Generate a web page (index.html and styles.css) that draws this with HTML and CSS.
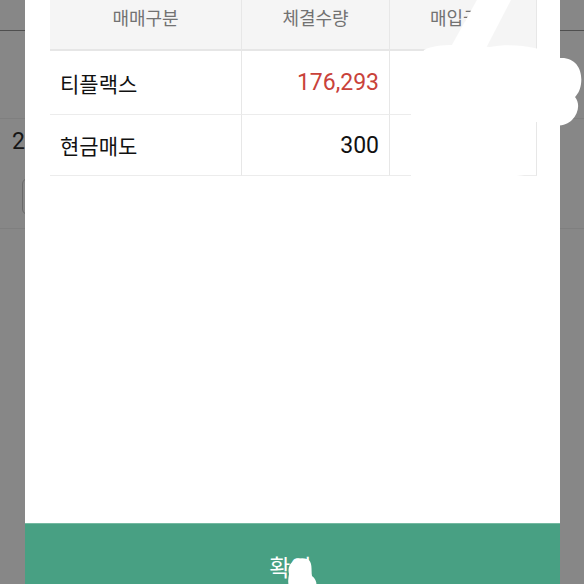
FILE: index.html
```html
<!DOCTYPE html>
<html lang="ko">
<head>
<meta charset="utf-8">
<title>체결내역</title>
<link rel="stylesheet" href="styles.css">
</head>
<body>
  <div class="page">
    <div class="page-top"></div>
    <div class="page-row"></div>
    <div class="page-row page-row-tall">
      <span class="page-num">2</span>
      <div class="page-btn"></div>
    </div>
  </div>

  <div class="dialog">
    <div class="grid">
      <div class="cell head">매매구분</div>
      <div class="cell head">체결수량</div>
      <div class="cell head">매입금액</div>

      <div class="cell r1 name">티플랙스</div>
      <div class="cell r1 num red">176,293</div>
      <div class="cell r1 num"></div>

      <div class="cell r2 name">현금매도</div>
      <div class="cell r2 num">300</div>
      <div class="cell r2 num"></div>
    </div>
    <div class="spacer"></div>
    <div class="confirm">확인</div>
  </div>

  <svg class="scribble" width="584" height="584" viewBox="0 0 584 584" xmlns="http://www.w3.org/2000/svg">
    <defs>
      <filter id="soft" x="-5%" y="-5%" width="110%" height="110%">
        <feGaussianBlur stdDeviation="0.7"/>
      </filter>
    </defs>
    <g fill="#ffffff" filter="url(#soft)">
      <path d="M478 -2 L512 -2 L484 52 L448 52 Z"/>
      <path d="M424 50 C440 42 468 46 490 47 C512 43 540 46 560 58 C576 57 583 70 581 84 C580 91 577 95 575 97 C580 103 579 113 572 120 C566 126 556 128 540 122 L534 122 L534 173 C518 179 440 179 411 176 L411 112 C414 98 417 70 424 50 Z"/>
      <path d="M289 574 C286 562 298 556 307 559 C313 561 311 570 312 576 C318 580 318 590 312 592 L292 592 C287 586 288 580 289 574 Z"/>
    </g>
  </svg>
</body>
</html>
```

FILE: styles.css
```css
html, body {
  margin: 0;
  padding: 0;
}

body {
  width: 584px;
  height: 584px;
  overflow: hidden;
  background: #878787;
  font-family: "Noto Sans CJK KR", "Noto Sans", sans-serif;
}

.page {
  display: flex;
  flex-direction: column;
}

.page-top {
  height: 30px;
  border-bottom: 1px solid #4f4f4f;
}

.page-row {
  height: 87px;
  border-bottom: 1px solid #7f7f7f;
}

.page-row-tall {
  height: 109px;
  display: flex;
  flex-direction: column;
  align-items: flex-start;
}

.page-num {
  font-family: Roboto, sans-serif;
  font-size: 23px;
  line-height: 27px;
  color: #161616;
  margin-left: 12px;
  margin-top: 9px;
}

.page-btn {
  margin-left: 22px;
  margin-top: 23px;
  width: 200px;
  height: 35px;
  border: 1px solid #6a6a6a;
  border-radius: 6px;
}

.dialog {
  position: fixed;
  left: 25px;
  top: -15px;
  width: 535px;
  height: 624px;
  background: #ffffff;
  display: flex;
  flex-direction: column;
}

.grid {
  margin-left: 25px;
  width: 487px;
  display: grid;
  grid-template-columns: 192px 148px 147px;
}

.cell {
  box-sizing: border-box;
  border-right: 1px solid #e7e7e7;
  display: flex;
  align-items: center;
}

.head {
  height: 66px;
  background: #f5f5f5;
  border-bottom: 2px solid #e6e6e6;
  justify-content: center;
  font-size: 18px;
  color: #727272;
}

.r1 {
  height: 64px;
  border-bottom: 1px solid #ececec;
}

.r2 {
  height: 61px;
  border-bottom: 1px solid #ececec;
}

.name {
  padding-left: 10px;
  font-size: 21px;
  color: #111111;
}

.num {
  justify-content: flex-end;
  padding-right: 10px;
  font-family: Roboto, "Noto Sans CJK KR", sans-serif;
  font-size: 23px;
  color: #111111;
}

.red {
  color: #c9423a;
}

.spacer {
  flex: 1;
}

.confirm {
  height: 86px;
  background: #48a083;
  box-shadow: inset 0 1px 0 #74b9a1;
  color: #ffffff;
  font-size: 23px;
  display: flex;
  align-items: center;
  justify-content: center;
  padding-right: 4px;
}

.scribble {
  position: fixed;
  left: 0;
  top: 0;
  pointer-events: none;
}
```
